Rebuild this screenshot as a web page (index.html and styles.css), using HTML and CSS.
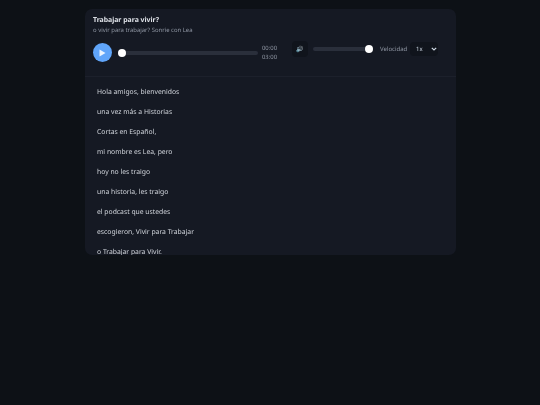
FILE: index.html
```html
<!DOCTYPE html>
<html lang="es">
<head>
    <meta charset="UTF-8">
    <meta name="viewport" content="width=device-width, initial-scale=1.0">
    <title>Trabajar para vivir?</title>
    <link rel="stylesheet" href="styles.css">
</head>
<body>
<article class="player">
    <header class="cabecera">
        <h1 class="titulo">Trabajar para vivir?</h1>
        <p class="subtitulo">o vivir para trabajar? Sonrie con Lea</p>
        <div class="controles">
            <div class="boton-play">
                <svg width="7" height="8" viewBox="0 0 7 8"><path d="M0.5 0.5L6.5 4L0.5 7.5Z" fill="#eaf4ff"/></svg>
            </div>
            <div class="barra barra-tiempo"><span class="tirador tirador-inicio"></span></div>
            <div class="tiempos">
                <span>00:00</span>
                <span>03:00</span>
            </div>
            <div class="boton-volumen">🔊</div>
            <div class="barra barra-volumen"><span class="tirador tirador-fin"></span></div>
            <span class="velocidad">Velocidad</span>
            <div class="selector">
                <span>1x</span>
                <svg width="6" height="4" viewBox="0 0 6 4"><path d="M0.8 0.8L3 3L5.2 0.8" fill="none" stroke="#cbd5e1" stroke-width="1.2"/></svg>
            </div>
        </div>
    </header>
    <section class="texto">
        <p>Hola amigos, bienvenidos</p>
        <p>una vez más a Historias</p>
        <p>Cortas en Español,</p>
        <p>mi nombre es Lea, pero</p>
        <p>hoy no les traigo</p>
        <p>una historia, les traigo</p>
        <p>el podcast que ustedes</p>
        <p>escogieron, Vivir para Trabajar</p>
        <p>o Trabajar para Vivir.</p>
    </section>
</article>
</body>
</html>
```

FILE: styles.css
```css
html, body {
    height: 100%;
}

body {
    margin: 0;
    padding-top: 9px;
    box-sizing: border-box;
    background-color: #0d1116;
    font-family: "Noto Sans", sans-serif;
    color: #d7dbe2;
    overflow: hidden;
    text-rendering: geometricPrecision;
}

.player {
    width: 371px;
    height: 246px;
    margin-left: 85px;
    background-color: #151923;
    border-radius: 7px;
    overflow: hidden;
    filter: blur(0.25px);
}

.cabecera {
    height: 68px;
    padding: 7px 8px 0;
    box-sizing: border-box;
    border-bottom: 1px solid #1c202b;
}

.titulo {
    margin: 0;
    font-size: 6.9px;
    line-height: 10px;
    font-weight: 700;
    color: #dfe2e8;
}

.subtitulo {
    margin: 0;
    font-size: 5.95px;
    line-height: 9px;
    color: #8f96a3;
}

.controles {
    display: flex;
    align-items: center;
    margin-top: 8px;
}

.boton-play {
    width: 19px;
    height: 19px;
    flex: none;
    border-radius: 50%;
    background-color: #60a5fa;
    display: flex;
    align-items: center;
    justify-content: center;
    margin-right: 6px;
}

.barra {
    position: relative;
    height: 4px;
    border-radius: 2px;
    background-color: #2a2f3b;
}

.barra-tiempo {
    width: 140px;
}

.barra-volumen {
    width: 59px;
    margin: -8px 8px 0 5px;
}

.tirador {
    position: absolute;
    top: -2px;
    width: 8px;
    height: 8px;
    border-radius: 50%;
    background-color: #ffffff;
}

.tirador-inicio {
    left: 0;
}

.tirador-fin {
    right: -1px;
}

.tiempos {
    display: flex;
    flex-direction: column;
    width: 16px;
    margin-left: 4px;
    font-size: 5.9px;
    line-height: 8.5px;
    color: #8f96a3;
}

.boton-volumen {
    width: 16px;
    height: 16px;
    margin: -8px 0 0 14px;
    border-radius: 4px;
    background-color: #10141c;
    font-size: 6px;
    line-height: 16px;
    text-align: center;
}

.velocidad {
    width: 28px;
    margin-top: -8px;
    font-size: 6px;
    color: #8f96a3;
}

.selector {
    width: 28px;
    height: 14px;
    margin: -8px 0 0 2px;
    padding: 0 1px 0 6px;
    box-sizing: border-box;
    border-radius: 4px;
    background-color: #10141c;
    display: flex;
    align-items: center;
    justify-content: space-between;
    font-size: 6px;
    color: #cbd5e1;
}

.texto {
    padding: 8px 12px 0;
}

.texto p {
    margin: 0 0 7px;
    font-size: 6.8px;
    line-height: 13px;
    color: #d0d4db;
}
```
